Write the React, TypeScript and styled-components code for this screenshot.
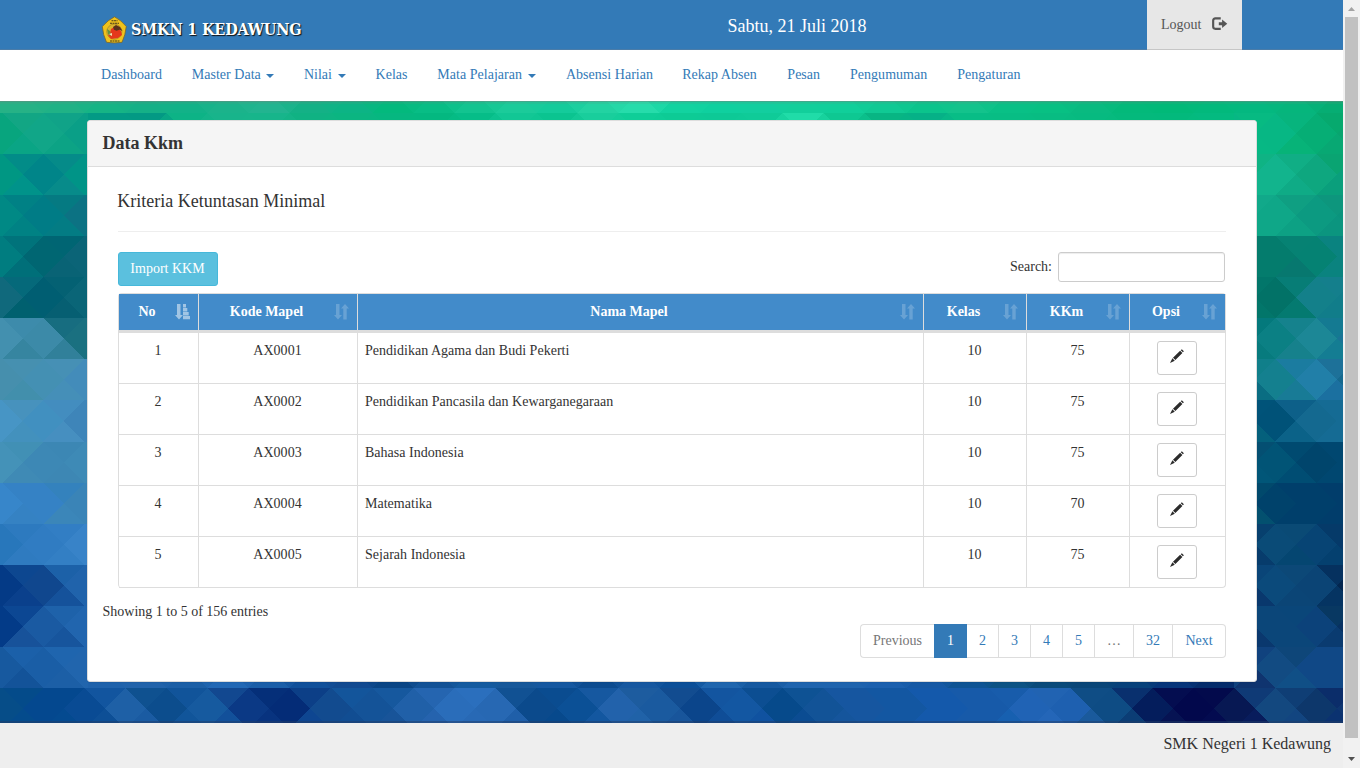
import React from "react";
import styled, { createGlobalStyle } from "styled-components";

const GlobalStyle = createGlobalStyle`
  * { box-sizing: border-box; }
  html, body { margin: 0; height: 100%; overflow: hidden; }
  body {
    font-family: "Liberation Serif", "Times New Roman", serif;
    font-size: 14px;
    line-height: 20px;
    color: #333;
    background: #eee;
  }
`;

const Frame = styled.div`
  display: flex;
  width: 1360px;
  height: 768px;
`;

const Page = styled.div`
  display: flex;
  flex-direction: column;
  width: 1343px;
  height: 768px;
`;

const TopBar = styled.header`
  display: flex;
  height: 50px;
  padding-left: 101px;
  background: #337ab7;
  box-shadow: inset 0 -1px 0 #4b7ca8;
`;

const Brand = styled.div`
  display: flex;
  align-items: center;
  gap: 4px;
  width: 626px;
  padding-top: 9px;
`;

const BrandName = styled.span`
  font-family: "DejaVu Serif Condensed", "DejaVu Serif", serif;
  font-stretch: condensed;
  font-weight: bold;
  font-size: 16px;
  letter-spacing: -0.15px;
  color: #fff;
  white-space: nowrap;
  text-shadow: 1px 1px 1px #111;
`;

const Today = styled.div`
  width: 420px;
  padding: 16px 0 0 0.5px;
  color: #fff;
  font-size: 18px;
  white-space: nowrap;
`;

const Logout = styled.a`
  display: flex;
  gap: 11px;
  width: 95px;
  height: 50px;
  padding: 15px 14px;
  background: #e7e7e7;
  box-shadow: inset 0 -1px 0 #c6c6c6;
  color: #555;
  white-space: nowrap;
  svg { margin-top: 2px; }
`;

const Nav = styled.nav`
  display: flex;
  gap: 29.7px;
  height: 51px;
  padding: 15px 0 0 101px;
  background: #fff;
`;

const NavLink = styled.a<{ $width: number }>`
  display: flex;
  align-items: flex-start;
  gap: 5.5px;
  flex: none;
  width: ${(p) => p.$width}px;
  color: #337ab7;
  letter-spacing: 0.03px;
  white-space: nowrap;
`;

const Caret = styled.i`
  margin-top: 9px;
  border: 4px solid transparent;
  border-top-color: currentColor;
  border-bottom: 0;
`;

const Main = styled.main`
  position: relative;
  height: 622px;
  padding: 19px 0 0 87px;
  overflow: hidden;
`;

const Backdrop = styled.svg`
  position: absolute;
  top: 0;
  left: 0;
`;

const Panel = styled.section`
  position: relative;
  width: 1170px;
  height: 562px;
  background: #fff;
  border: 1px solid #ddd;
  border-radius: 3px;
  box-shadow: 0 1px 1px rgba(0, 0, 0, 0.05);
  overflow: hidden;
`;

const PanelTitle = styled.h3`
  height: 46px;
  margin: 0;
  padding: 12px 14.4px;
  background: #f5f5f5;
  border-bottom: 1px solid #ddd;
  font-size: 18px;
  line-height: 20px;
`;

const PanelBody = styled.div`
  padding: 24px 30px 0;
`;

const Subtitle = styled.h4`
  height: 41px;
  margin: 0 0 20px;
  border-bottom: 1px solid #eee;
  font-size: 18px;
  font-weight: normal;
  line-height: 20px;
  text-indent: -0.7px;
`;

const Tools = styled.div`
  display: flex;
  justify-content: space-between;
  height: 41px;
  padding-right: 1px;
`;

const ImportButton = styled.button`
  width: 100px;
  height: 34px;
  padding: 0 1px 0 0;
  background: #5bc0de;
  border: 1px solid #46b8da;
  border-radius: 3px;
  color: #fff;
  font: inherit;
`;

const SearchLabel = styled.label`
  display: flex;
  gap: 6px;
  height: 30px;
  line-height: 29px;
`;

const SearchInput = styled.input`
  width: 167px;
  height: 30px;
  border: 1px solid #ccc;
  border-radius: 3px;
  box-shadow: inset 0 1px 1px rgba(0, 0, 0, 0.075);
`;

const Table = styled.table`
  width: 1108px;
  table-layout: fixed;
  border-collapse: separate;
  border-spacing: 0;
  border: 1px solid #ddd;
  border-width: 1px 0 0 1px;
  border-radius: 4px;
`;

const HeadCell = styled.th`
  height: 39px;
  padding: 0;
  background: #428bca;
  border-right: 1px solid #ddd;
  border-bottom: 3px solid #ddd;
  color: #fff;
`;

const HeadContent = styled.div`
  display: grid;
  grid-template-columns: 1fr 15px;
  gap: 8px;
  padding: 0 8px 0 0;
  text-align: center;
  span { padding-left: 8px; }
  svg { margin-top: 2px; }
`;

const Cell = styled.td<{ $left?: boolean }>`
  height: 51px;
  padding: 8px 8px 0 7px;
  vertical-align: top;
  border-right: 1px solid #ddd;
  border-bottom: 1px solid #ddd;
  letter-spacing: 0.02px;
  text-align: ${(p) => (p.$left ? "left" : "center")};
  tr:last-child &:last-child { border-bottom-right-radius: 4px; }
`;

const EditButton = styled.button`
  display: flex;
  justify-content: center;
  width: 40px;
  height: 34px;
  margin: 0 auto;
  padding: 7px 0 0;
  background: #fff;
  border: 1px solid #ccc;
  border-radius: 3px;
`;

const Summary = styled.div`
  margin-left: 14.5px;
  padding-top: 14px;
  line-height: 20px;
`;

const Pager = styled.div`
  display: flex;
  justify-content: flex-end;
  margin-top: 2px;
  padding-right: 30px;
`;

const PageLink = styled.a<{ $width: number; $active?: boolean; $muted?: boolean }>`
  width: ${(p) => p.$width}px;
  height: 34px;
  padding-top: 6px;
  text-align: center;
  border: 1px solid ${(p) => (p.$active ? "#337ab7" : "#ddd")};
  border-left-width: ${(p) => (p.$active ? 1 : 0)}px;
  background: ${(p) => (p.$active ? "#337ab7" : "#fff")};
  color: ${(p) => (p.$active ? "#fff" : p.$muted ? "#777" : "#337ab7")};
  &:first-child { border-left-width: 1px; border-right-width: 0; border-radius: 4px 0 0 4px; }
  &:last-child { border-radius: 0 4px 4px 0; }
`;

const Footer = styled.footer`
  height: 45px;
  padding: 11px 12px 0 0;
  background: #eee;
  text-align: right;
  font-size: 16px;
`;

const Scrollbar = styled.aside`
  display: flex;
  flex-direction: column;
  align-items: center;
  width: 17px;
  height: 768px;
  background: #f1f1f1;
`;

const ScrollArrow = styled.svg`
  height: 17px;
  width: 17px;
  flex: none;
`;

const Thumb = styled.div`
  width: 13px;
  height: 721px;
  margin-bottom: 13px;
  background: #c1c1c1;
`;

// Facets of the mosaic: [row, first column, cells], each cell "top right bottom left".
type Strip = [number, number, string[]];
const strips: Strip[] = [
  [0, 0, "26b286 20b286 16b485 15b087 12b288 1bb38b 22b490 14b186 0cb485 03b97d 08bd85 12c490 1bcb9a 14cb9b 22d3a2 26dcab 12d3a0 0fd09f 12ce9f 12cf9b 10cf9a 10c994 0bc48c 13c38c 09c086 08c083 09ba80 03b97a 01b978 02b97c 04b880 06b57c 06ad73".split(" ")],
  [1, 2, "039a85 039984 0db386 18b48b 17b58b 10b283 0bb581 06b780 04b880 06bd88 12c795 0bc490 19ce9c 0fce98 0dcb95 0dc996 0fcb98 20dca8 0ec892 08b583 06b187 08bd86 08bd84 08bc82 07ba80 04b97c 03b97c 04ba80".split(" ")],
  [14, 2, "1f62ab 2263aa 1c5fa6 2268b5 1b5ea8 11509a 124a90 0a4585 135296 155ba0 17589a 1658a0 0d4c90 1758a0 0c4f98 2066ae 1659a0 1f64ae 1f64ae 1c60ae 1659a5 0f5494 0d5384 0a4a7a 0a4678 08417a 07357a 052c6b".split(" ")],
  [1, 0, ["12a684 11a688 0aa585 08a57e", "10a388 0a9f87 0ca385 11a68a"]],
  [2, 0, ["028c88 008589 00938a 009783", "058b89 009487 078b8a 00858b"]],
  [3, 0, ["008185 007c86 008284 008985", "057a82 0c7283 037c84 007c86"]],
  [4, 0, ["00737b 006672 006f79 007d80", "006573 0b6477 096375 006573"]],
  [5, 0, ["05697a 005e72 00606f 10697c", "046173 0a6577 065f72 005b6f"]],
  [6, 0, ["3d8bab 3c8aa8 3685a0 4390af", "176d80 1a7080 31809a 3984a0"]],
  [7, 0, ["4690b0 4490b3 428fac 468fad", "4690b5 438cba 458fb8 4590b6"]],
  [8, 0, ["4792bd 4190c0 4391bd 4795c5", "438dbf 3e85b9 468fc0 4089ba"]],
  [9, 0, ["4190b5 3d88b5 3f8ab5 4492b8", "3c87b4 3e8ab6 3d87b4 3b85b4"]],
  [10, 0, ["3582c5 3582c5 3582c3 3786ca", "3482bd 3a84b7 3b86b9 3481c5"]],
  [11, 0, ["2d7abf 307cc2 2f7bc0 2877bb", "327ec4 3883c8 337fc4 307cc3"]],
  [12, 0, ["0d4790 10478e 0a408c 043a86", "1c61a8 2063ab 15529b 0e4a93"]],
  [13, 0, ["0c4793 1a5aa2 17529a 033b88", "1e62aa 2165ae 17559d 1c5ca5"]],
  [14, 0, ["1b60a9 1a5ea6 135399 17599f", "1f65ae 2165ad 1c5fa6 1c60a8"]],
  [1, 30, ["07ba82 07b784 07b884 07b784", "07b47d 06ae75 07b378 09b781", "06a96e 08a56f 08a873 05a96f"]],
  [2, 30, ["0fb384 12b48d 12b48d 12b48d", "10ae85 0ea77f 0fab86 14b08d", "0aa472 0a9f7c 0a9f7c 10a47f"]],
  [3, 30, ["11a98a 0fa788 0fa788 0fa788", "0f9f82 0c9a81 0da184 12a387", "0d967d 0a947d 0b957f 0d9c83"]],
  [4, 30, ["047c6d 047c6d 047c6d 047c6d", "068273 058273 07786f 03796c", "0a8380 0a8380 0a837f 068376"]],
  [5, 30, ["02766a 027267 02766a 02766a", "077d76 13808a 047a70 027267", "147f8c 117d8a 117d8a 15808b"]],
  [6, 30, ["04797c 0b8084 077b7e 04797c", "15828d 1c8796 16818c 0f8086", "147a92 197496 147d93 1e8696"]],
  [7, 30, ["107f8a 14808f 0a6d82 0e7789", "1b7ca0 217fa8 187b96 167b95", "1d7199 15698f 1b70a0 227fa9"]],
  [8, 30, ["005379 005278 04607c 025b79", "0d6089 146990 0b6288 02537b", "156b94 156b94 156b94 146990"]],
  [9, 30, ["044f72 015476 015678 015476", "004a70 00456c 004d73 015476", "004770 004770 004770 00456c"]],
  [10, 30, ["01496c 00426b 03506f 014d72", "003f6b 003f6b 003f6b 00426b", "013d6b 013d6b 013d6b 003f6b"]],
  [11, 30, ["07406e 0a4b77 073c6c 083c6c", "0a4a75 074474 054671 0b4b77", "053a69 05396a 04406f 074474"]],
  [12, 30, ["0a4578 0b4a7b 09386d 0a4578", "0c4877 0b4475 0b4576 0b4878", "05315f 03264f 053462 0b4577"]],
  [13, 30, ["0b4679 0b4679 0a386e 0b4679", "0a4679 0c427a 0b4679 0a4679", "083862 073162 0a3b70 0c427a"]],
  [14, 30, ["10427e 124b82 0f346f 10427e", "0e4679 104886 104f86 104f86", "104886 104886 104886 104886"]],
  [15, 0, [
    "044b8a 04488f 044b8c 064d88", "04488f 094b94 044a90 03488f", "12559f 1e60a6 0d4f96 064b92",
    "0f5190 0c4d8d 1a5ba2 1e60a6", "11549a 165a9f 11559a 0d4e90", "124890 0b3985 12509a 15579c",
    "052f79 042c77 08337f 0a3a86", "0c3f87 124b8f 0e4691 042e76", "13559b 145398 114d92 124b8e",
    "16589e 2060a8 185499 13529a", "2565b0 2a6dba 2563ae 2060ad", "2b6fbd 2768b3 2869b5 2b6fbd",
    "115193 0b4a8c 1f5fa9 266ab4", "0a4c90 0b5096 07498c 084a8c", "1658a0 2262ab 1357a0 0b5099",
    "1d5c9f 1a5a9f 2062a8 2263aa", "124c90 0b458b 18559b 195a9f", "1355a0 1357a2 0f4d97 0a438a",
    "0c4e92 064a8b 1052a0 1458a5", "0e5294 125397 0b4c92 064a8b", "1656a0 1656a0 15559c 15559b",
    "1357a2 1357a2 1357a2 1357a2", "1459ab 1459ab 1459ab 1357a5", "175aa9 175aa9 175aa9 1459ab",
    "185cab 2063b5 1760b0 155ca9", "2163b2 1e60b0 2466b8 2064b5", "0f4d85 0e4c84 1a5a9c 2060a8",
    "09306e 041d5c 0b3d75 0d4680", "040d50 02084c 061353 041d5a", "030a4c 071853 030b50 020848",
    "0f3a76 13487f 081c5c 07174f", "0f3e75 0d376b 124580 14497f", "0b2d6a 0e3570 0b3270 092c68",
  ]],
];

const UNIT = 41.07;

const blend = (a: string, b: string) =>
  [0, 2, 4]
    .map((i) => Math.round((parseInt(a.slice(i, i + 2), 16) + parseInt(b.slice(i, i + 2), 16)) / 2))
    .map((v) => v.toString(16).padStart(2, "0"))
    .join("");

function Mosaic() {
  const facets: React.ReactNode[] = [];
  strips.forEach(([row, first, cells], s) => {
    // Neighbouring side facets share one colour, so together they read as a diamond.
    let shared = "";
    cells.forEach((cell, i) => {
      const k = first + i;
      const c = cell.split(" ");
      const next = cells[i + 1] ?? cell;
      const [top, right, bottom, ownLeft] = c.length === 1 ? [c[0], blend(c[0], next), c[0], c[0]] : c;
      const left = shared || ownLeft;
      shared = right;
      const x0 = Math.round(2 + k * UNIT);
      const x1 = Math.round(2 + (k + 1) * UNIT);
      const y0 = Math.round(12 + (row - 1) * UNIT);
      const y1 = Math.round(12 + row * UNIT);
      const cx = (x0 + x1) / 2;
      const cy = (y0 + y1) / 2;
      const outer = k === 1 ? x1 + 4 : x1;
      const inner = k === 0 ? 0 : x0;
      const sides: [string, string][] = [
        [top, `${x0},${y0} ${x1},${y0} ${cx},${cy}`],
        [bottom, `${x0},${y1} ${x1},${y1} ${cx},${cy}`],
        [right, `${x1},${y0} ${outer},${y0} ${outer},${y1} ${x1},${y1} ${cx},${cy}`],
        [left, `${inner},${y0} ${x0},${y0} ${cx},${cy} ${x0},${y1} ${inner},${y1}`],
      ];
      sides.forEach(([fill, points], j) =>
        facets.push(<polygon key={`${s}-${i}-${j}`} points={points} fill={`#${fill}`} />)
      );
    });
  });
  return (
    <Backdrop width="1343" height="622" viewBox="0 0 1343 622">
      <rect width="1343" height="622" fill="#1059a0" />
      <g shapeRendering="crispEdges">{facets}</g>
      <rect width="1343" height="1" fill="#6a8a80" opacity=".55" />
      <rect width="1343" height="2" y="1" fill="#6a8a80" opacity=".15" />
      <rect width="1343" height="2" y="620" fill="#223b66" opacity=".5" />
    </Backdrop>
  );
}

const Crest = () => (
  <svg width="26" height="28" viewBox="0 0 26 28">
    <path d="M13.5 .8Q20 4 25.3 10.5 24.5 19 21 26.3 13 27.6 5.5 26.3 2 19 1.3 10.5 7 4 13.5 .8Z" fill="#efc21c" stroke="#76652c" strokeWidth=".8" />
    <circle cx="13.3" cy="15.7" r="7.6" fill="#dcb52e" stroke="#9a7f26" strokeWidth=".6" />
    <path d="M10 13q4-3 7-.5l3 2.5 1 4-4 3-7 1-3-4 2-2Z" fill="#e5381c" />
    <path d="M12 11l3-2 4 2 2.5 4-3-1.2-3 1-2.5-1Z" fill="#5a321c" />
    <path d="M6 13l3 2 1 5-3-2Z" fill="#64923d" />
    <path d="M8 18l3-1 0 3Z" fill="#eee3b3" />
    <path d="M10.5 4.7h6M9 7.3h9M9 25h10" stroke="#41391d" strokeWidth="1.1" strokeDasharray="2 .5" />
  </svg>
);

const LogoutIcon = () => (
  <svg width="16" height="14" viewBox="0 0 16 14">
    <path d="M9 1.2H3.5Q1.2 1.2 1.2 3.5V9.7Q1.2 12 3.5 12H9" fill="none" stroke="#555" strokeWidth="2.2" />
    <path d="M7 5.2h3.4V2.4L15.7 6.7 10.4 11V8.2H7Z" fill="#555" />
  </svg>
);

const PencilIcon = () => (
  <svg width="14" height="14" viewBox="0 0 14 14">
    <path d="M10.8 1.2 11.8.3 13.9 2.2 12.9 3.2ZM10.1 1.7 12.4 4 5.4 11.1 3 8.7ZM2.4 9.3 4.8 11.7 0 13.9Z" fill="#2b2b2b" />
  </svg>
);

const SortIcon = ({ active }: { active?: boolean }) => (
  <svg width="15" height="16" viewBox="0 0 15 16" opacity={active ? 0.5 : 0.2}>
    <path d="M2 0h3.5v11H8l-4 4.5L0 11h2Z" fill="#fff" />
    {active ? (
      <path d="M8 0h3v3.4H8ZM8 4h4.3v3.4H8ZM8 8h5.7v3.4H8ZM8 12h7v3.2H8Z" fill="#fff" />
    ) : (
      <path d="M9.3 15.5h3.4v-11H15L11 0 7 4.5h2.3Z" fill="#fff" />
    )}
  </svg>
);

const links: [string, number, boolean?][] = [
  ["Dashboard", 61],
  ["Master Data", 82.5, true],
  ["Nilai", 42, true],
  ["Kelas", 32],
  ["Mata Pelajaran", 99, true],
  ["Absensi Harian", 86.5],
  ["Rekap Absen", 75.5],
  ["Pesan", 33],
  ["Pengumuman", 77.5],
  ["Pengaturan", 64],
];

const columns: [string, number][] = [
  ["No", 80],
  ["Kode Mapel", 159],
  ["Nama Mapel", 566],
  ["Kelas", 103],
  ["KKm", 103],
  ["Opsi", 96],
];

const subjects: [string, string, number][] = [
  ["AX0001", "Pendidikan Agama dan Budi Pekerti", 75],
  ["AX0002", "Pendidikan Pancasila dan Kewarganegaraan", 75],
  ["AX0003", "Bahasa Indonesia", 75],
  ["AX0004", "Matematika", 70],
  ["AX0005", "Sejarah Indonesia", 75],
];

const pages: [string, number][] = [
  ["Previous", 74],
  ["1", 33],
  ["2", 32],
  ["3", 32],
  ["4", 32],
  ["5", 32],
  ["…", 39],
  ["32", 39],
  ["Next", 53],
];

export default function App() {
  return (
    <>
      <GlobalStyle />
      <Frame>
        <Page>
          <TopBar>
            <Brand>
              <Crest />
              <BrandName>SMKN 1 KEDAWUNG</BrandName>
            </Brand>
            <Today>Sabtu, 21 Juli 2018</Today>
            <Logout>
              Logout <LogoutIcon />
            </Logout>
          </TopBar>
          <Nav>
            {links.map(([label, width, menu]) => (
              <NavLink key={label} $width={width}>
                {label}
                {menu && <Caret />}
              </NavLink>
            ))}
          </Nav>
          <Main>
            <Mosaic />
            <Panel>
              <PanelTitle>Data Kkm</PanelTitle>
              <PanelBody>
                <Subtitle>Kriteria Ketuntasan Minimal</Subtitle>
                <Tools>
                  <ImportButton>Import KKM</ImportButton>
                  <SearchLabel>
                    Search: <SearchInput />
                  </SearchLabel>
                </Tools>
                <Table>
                  <colgroup>
                    {columns.map(([label, width]) => (
                      <col key={label} width={width} />
                    ))}
                  </colgroup>
                  <thead>
                    <tr>
                      {columns.map(([label], i) => (
                        <HeadCell key={label}>
                          <HeadContent>
                            <span>{label}</span>
                            <SortIcon active={i === 0} />
                          </HeadContent>
                        </HeadCell>
                      ))}
                    </tr>
                  </thead>
                  <tbody>
                    {subjects.map(([code, name, score], i) => (
                      <tr key={code}>
                        <Cell>{i + 1}</Cell>
                        <Cell>{code}</Cell>
                        <Cell $left>{name}</Cell>
                        <Cell>10</Cell>
                        <Cell>{score}</Cell>
                        <Cell>
                          <EditButton>
                            <PencilIcon />
                          </EditButton>
                        </Cell>
                      </tr>
                    ))}
                  </tbody>
                </Table>
              </PanelBody>
              <Summary>Showing 1 to 5 of 156 entries</Summary>
              <Pager>
                {pages.map(([label, width], i) => (
                  <PageLink key={label} $width={width} $active={i === 1} $muted={i === 0 || i === 6}>
                    {label}
                  </PageLink>
                ))}
              </Pager>
            </Panel>
          </Main>
          <Footer>SMK Negeri 1 Kedawung</Footer>
        </Page>
        <Scrollbar>
          <ScrollArrow viewBox="0 0 17 17">
            <path d="M5 11h7L8.5 7Z" fill="#a3a3a3" />
          </ScrollArrow>
          <Thumb />
          <ScrollArrow viewBox="0 0 17 17">
            <path d="M5 6h7L8.5 10Z" fill="#505050" />
          </ScrollArrow>
        </Scrollbar>
      </Frame>
    </>
  );
}
